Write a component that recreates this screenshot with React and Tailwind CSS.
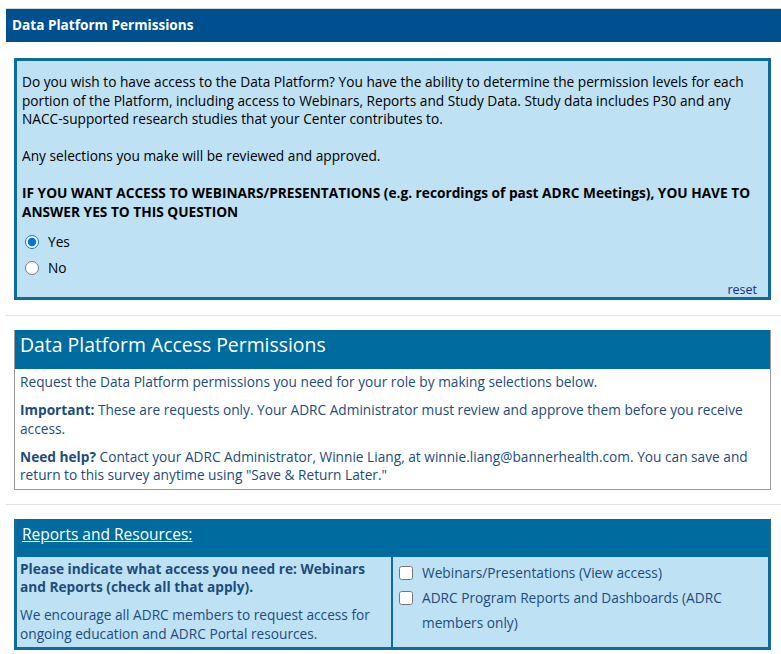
import React, { useState } from 'react';

export default function App() {
    const [access, setAccess] = useState('yes');
    const [checks, setChecks] = useState({ webinars: false, reports: false });

    const toggle = (key) => setChecks({ ...checks, [key]: !checks[key] });

    return (
        <div className="min-h-screen bg-white pt-2 pl-[6px] font-['Open_Sans',sans-serif] text-[13.7px] leading-[18.5px]">
            {/* Section title */}
            <div className="border-t border-[#d6d6d6] bg-[#00508f] h-[34px] flex items-center pl-[6px] text-white font-bold text-[13.6px]">
                Data Platform Permissions
            </div>

            {/* Access question */}
            <div className="ml-2 mr-[10px] mt-4 border-[3px] border-[#0f6b9c] bg-[#bee1f4] px-[5px] pt-[12px] text-black">
                <p>
                    Do you wish to have access to the Data Platform? You have the ability to determine the permission levels for each
                    portion of the Platform, including access to Webinars, Reports and Study Data. Study data includes P30 and any
                    NACC-supported research studies that your Center contributes to.
                </p>
                <p className="mt-[18.5px]">Any selections you make will be reviewed and approved.</p>
                <p className="mt-[18.5px] font-bold">
                    IF YOU WANT ACCESS TO WEBINARS/PRESENTATIONS (e.g. recordings of past ADRC Meetings), YOU HAVE TO
                    ANSWER YES TO THIS QUESTION
                </p>
                <div className="mt-[12px] flex flex-col gap-[7px]">
                    {[['yes', 'Yes'], ['no', 'No']].map(([value, label]) => (
                        <label key={value} className="flex items-center gap-[9px] pl-[3px] cursor-pointer">
                            <input
                                type="radio"
                                name="access"
                                checked={access === value}
                                onChange={() => setAccess(value)}
                                className="m-0 w-[14px] h-[14px] accent-[#0075d9]"
                            />
                            <span>{label}</span>
                        </label>
                    ))}
                </div>
                <div className="mt-[6px] text-right pr-[6px] text-[12.5px] leading-[14px] text-[#1c2c79]">
                    <a href="#" onClick={(e) => { e.preventDefault(); setAccess(''); }}>reset</a>
                </div>
            </div>

            <div className="mt-[15px] border-t border-[#e2e2e2]" />

            {/* Access permissions intro */}
            <div className="ml-2 mr-[10px] mt-[14px] border border-[#9a9a9a] border-t-0">
                <div className="bg-[#006b9e] h-[39px] pl-[5px] pt-[1px] text-white text-[19.4px] leading-[28px]">
                    Data Platform Access Permissions
                </div>
                <div className="px-[5px] pt-[4px] pb-[4px] text-[#1d4c7c]">
                    <p>Request the Data Platform permissions you need for your role by making selections below.</p>
                    <p className="mt-[9.5px]">
                        <b>Important:</b> These are requests only. Your ADRC Administrator must review and approve them before you receive
                        access.
                    </p>
                    <p className="mt-[9.5px]">
                        <b>Need help?</b> Contact your ADRC Administrator, Winnie Liang, at winnie.liang@bannerhealth.com. You can save and
                        return to this survey anytime using "Save &amp; Return Later."
                    </p>
                </div>
            </div>

            <div className="mt-[14px] border-t border-[#e2e2e2]" />

            {/* Reports and resources */}
            <div className="ml-2 mr-[10px] mt-[14px] border-[3px] border-t-0 border-[#0f6b9c] bg-[#0f6b9c]">
                <div className="bg-[#006b9e] h-[38px] pl-[5px] pt-[4px] text-white text-[15.5px] leading-[22px]">
                    <span className="underline">Reports and Resources:</span>
                </div>
                <div className="grid grid-cols-[374px_1fr] gap-[2px]">
                    <div className="bg-[#bee1f4] px-[3px] pt-[3px] pb-[4px] text-[#1d4c7c]">
                        <p className="font-bold">
                            Please indicate what access you need re: Webinars and Reports (check all that apply).
                        </p>
                        <p className="mt-[9.5px]">
                            We encourage all ADRC members to request access for ongoing education and ADRC Portal resources.
                        </p>
                    </div>
                    <div className="bg-[#bee1f4] pl-[6px] pr-[8px] pt-[3px] pb-[6px] text-[#1d4c7c] leading-[25px]">
                        {[
                            ['webinars', 'Webinars/Presentations (View access)'],
                            ['reports', 'ADRC Program Reports and Dashboards (ADRC members only)'],
                        ].map(([key, label]) => (
                            <label key={key} className="flex items-start gap-[9px] cursor-pointer">
                                <input
                                    type="checkbox"
                                    checked={checks[key]}
                                    onChange={() => toggle(key)}
                                    className="mt-[6px] m-0 w-[14px] h-[14px] shrink-0"
                                />
                                <span>{label}</span>
                            </label>
                        ))}
                    </div>
                </div>
            </div>
        </div>
    );
}
